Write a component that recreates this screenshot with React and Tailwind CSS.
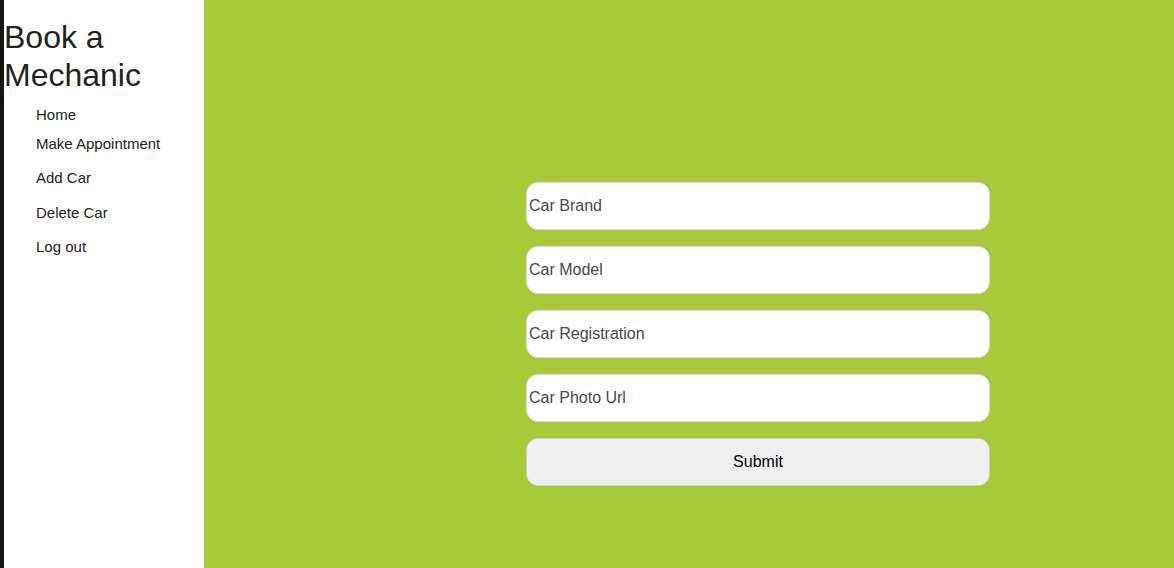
import React from 'react'

const navItems = [
  { label: 'Home', cls: 'h-[29px]' },
  { label: 'Make Appointment', cls: 'h-[34px]' },
  { label: 'Add Car', cls: 'h-[35px]' },
  { label: 'Delete Car', cls: 'h-[34px]' },
  { label: 'Log out', cls: 'h-[34px]' },
]

const fields = ['Car Brand', 'Car Model', 'Car Registration', 'Car Photo Url']

export default function App() {
  return (
    <div className="flex h-[568px] w-full font-['Liberation_Sans',Arial,sans-serif] text-[#222]">
      {/* Sidebar */}
      <aside className="w-[204px] shrink-0 border-l-4 border-[#151515] bg-white">
        <h1 className="mt-[18px] text-[32px] leading-[38px] font-normal">Book a Mechanic</h1>
        <ul className="mt-[12px] pl-8 text-[15px]">
          {navItems.map((item) => (
            <li key={item.label} className={`${item.cls} leading-[18px]`}>
              {item.label}
            </li>
          ))}
        </ul>
      </aside>

      {/* Main */}
      <main className="flex-1 bg-[#a8c937] pt-[182px] pl-[322px]">
        <form className="flex w-[464px] flex-col gap-4" onSubmit={(e) => e.preventDefault()}>
          {fields.map((f) => (
            <input
              key={f}
              placeholder={f}
              className="h-12 w-full rounded-xl border border-[#dcdcdc] bg-white px-0.5 text-base text-[#333] placeholder:text-[#4a4a4a] outline-none"
            />
          ))}
          <button
            type="submit"
            className="h-12 w-full rounded-xl border border-[#cfcfcf] bg-[#efefef] text-base text-black"
          >
            Submit
          </button>
        </form>
      </main>
    </div>
  )
}
